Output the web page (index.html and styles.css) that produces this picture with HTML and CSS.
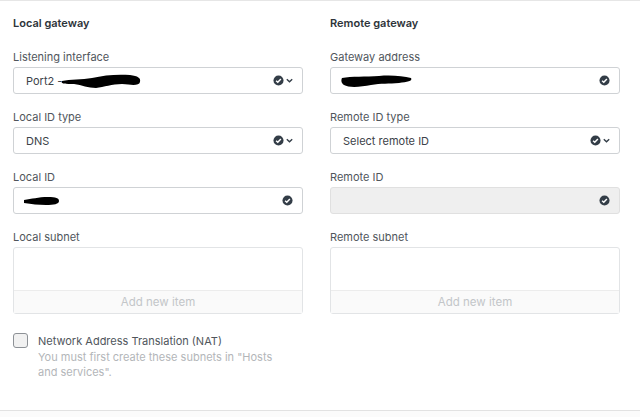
FILE: index.html
```html
<!DOCTYPE html>
<html>
<head>
  <title>Gateway settings</title>
  <link rel="stylesheet" href="styles.css">
</head>
<body>
  <div class="panel">
    <div class="columns">
      <div class="column">
        <h3>Local gateway</h3>

        <div class="field">
          <label>Listening interface</label>
          <div class="input select">
            <span class="value">Port2 -</span>
            <svg class="redact" width="82" height="16" viewBox="0 0 82 16"><path d="M2 8 C10 6 22 7 32 5 C44 2 58 1 70 2 C78 3 81 5 80 9 C79 13 72 12 62 11 C52 11 44 14 36 15 C28 15 22 12 14 11 C6 11 0 11 2 8 Z" fill="#000"/></svg>
            <span class="icons">
              <svg width="11" height="11" viewBox="0 0 12 12"><circle cx="6" cy="6" r="5.5" fill="#333d47"/><path d="M3.4 6.2 L5.2 7.9 L8.6 4.3" fill="none" stroke="#fff" stroke-width="1.6"/></svg>
              <svg width="9" height="9" viewBox="0 0 10 10"><path d="M2 3.5 L5 6.5 L8 3.5" fill="none" stroke="#333d47" stroke-width="1.5"/></svg>
            </span>
          </div>
        </div>

        <div class="field">
          <label>Local ID type</label>
          <div class="input select">
            <span class="value">DNS</span>
            <span class="icons">
              <svg width="11" height="11" viewBox="0 0 12 12"><circle cx="6" cy="6" r="5.5" fill="#333d47"/><path d="M3.4 6.2 L5.2 7.9 L8.6 4.3" fill="none" stroke="#fff" stroke-width="1.6"/></svg>
              <svg width="9" height="9" viewBox="0 0 10 10"><path d="M2 3.5 L5 6.5 L8 3.5" fill="none" stroke="#333d47" stroke-width="1.5"/></svg>
            </span>
          </div>
        </div>

        <div class="field">
          <label>Local ID</label>
          <div class="input">
            <svg class="redact" width="36" height="10" viewBox="0 0 36 10"><path d="M0 4 C8 3 14 1 24 1 C32 1 35 2 35 5 C35 8 30 9 22 9 C14 9 8 8 0 7 Z" fill="#000"/></svg>
            <span class="icons">
              <svg width="11" height="11" viewBox="0 0 12 12"><circle cx="6" cy="6" r="5.5" fill="#333d47"/><path d="M3.4 6.2 L5.2 7.9 L8.6 4.3" fill="none" stroke="#fff" stroke-width="1.6"/></svg>
            </span>
          </div>
        </div>

        <div class="field">
          <label>Local subnet</label>
          <div class="list">
            <div class="list-body"></div>
            <div class="list-add">Add new item</div>
          </div>
        </div>
      </div>

      <div class="column">
        <h3>Remote gateway</h3>

        <div class="field">
          <label>Gateway address</label>
          <div class="input">
            <svg class="redact" width="72" height="16" viewBox="0 0 72 16"><path d="M1 5 C10 3 25 4 38 3 C50 2 62 3 70 5 C72 8 66 9 58 10 C48 11 40 10 30 12 C20 14 8 15 3 12 C0 10 0 7 1 5 Z" fill="#000"/></svg>
            <span class="icons">
              <svg width="11" height="11" viewBox="0 0 12 12"><circle cx="6" cy="6" r="5.5" fill="#333d47"/><path d="M3.4 6.2 L5.2 7.9 L8.6 4.3" fill="none" stroke="#fff" stroke-width="1.6"/></svg>
            </span>
          </div>
        </div>

        <div class="field">
          <label>Remote ID type</label>
          <div class="input select">
            <span class="value">Select remote ID</span>
            <span class="icons">
              <svg width="11" height="11" viewBox="0 0 12 12"><circle cx="6" cy="6" r="5.5" fill="#333d47"/><path d="M3.4 6.2 L5.2 7.9 L8.6 4.3" fill="none" stroke="#fff" stroke-width="1.6"/></svg>
              <svg width="9" height="9" viewBox="0 0 10 10"><path d="M2 3.5 L5 6.5 L8 3.5" fill="none" stroke="#333d47" stroke-width="1.5"/></svg>
            </span>
          </div>
        </div>

        <div class="field">
          <label>Remote ID</label>
          <div class="input disabled">
            <span class="icons">
              <svg width="11" height="11" viewBox="0 0 12 12"><circle cx="6" cy="6" r="5.5" fill="#333d47"/><path d="M3.4 6.2 L5.2 7.9 L8.6 4.3" fill="none" stroke="#fff" stroke-width="1.6"/></svg>
            </span>
          </div>
        </div>

        <div class="field">
          <label>Remote subnet</label>
          <div class="list">
            <div class="list-body"></div>
            <div class="list-add">Add new item</div>
          </div>
        </div>
      </div>
    </div>

    <div class="nat">
      <span class="checkbox"></span>
      <div class="nat-text">
        <div class="nat-label">Network Address Translation (NAT)</div>
        <div class="nat-help">You must first create these subnets in "Hosts and services".</div>
      </div>
    </div>
  </div>
  <div class="footer"></div>
</body>
</html>
```

FILE: styles.css
```css
body {
  margin: 0;
  font-family: Inter, "Noto Sans", sans-serif;
  font-size: 11px;
  color: #444b52;
  background-color: #fff;
}
.panel {
  border-top: 1px solid #e6e6e6;
  padding: 14px 20px 0 13px;
  height: 410px;
  box-sizing: border-box;
}
.columns {
  display: grid;
  grid-template-columns: 290px 290px;
  column-gap: 27px;
}
h3 {
  margin: 0 0 19px;
  font-size: 11px;
  font-weight: 600;
  line-height: 16px;
  color: #2e343a;
}
.field {
  margin-bottom: 16px;
}
.field label {
  display: block;
  line-height: 14px;
  margin-bottom: 3px;
  color: #50565c;
}
.input {
  display: flex;
  align-items: center;
  height: 27px;
  box-sizing: border-box;
  border: 1px solid #cfd2d5;
  border-radius: 3px;
  padding: 0 8px 0 12px;
  color: #3c4248;
}
.input.disabled {
  background-color: #efefef;
  border-color: #e0e0e0;
}
.value {
  white-space: nowrap;
}
.redact {
  margin-left: -2px;
}
.icons {
  margin-left: auto;
  display: flex;
  align-items: center;
  gap: 1px;
}
.input:not(.select) .icons {
  margin-right: 1px;
}
.list {
  border: 1px solid #e2e4e6;
  border-radius: 3px;
  height: 67px;
  box-sizing: border-box;
  display: flex;
  flex-direction: column;
}
.list-body {
  flex: 1;
}
.list-add {
  height: 22px;
  line-height: 22px;
  text-align: center;
  background-color: #fafafa;
  border-top: 1px solid #ececec;
  color: #c3c6c9;
  font-size: 11.5px;
}
.nat {
  display: flex;
  gap: 10px;
  margin-top: 3px;
}
.checkbox {
  width: 15px;
  height: 15px;
  box-sizing: border-box;
  border: 1.5px solid #8d9196;
  border-radius: 3px;
  background-color: #f1f1f1;
  margin-top: 0;
}
.nat-label {
  line-height: 17px;
  color: #50565c;
}
.nat-help {
  width: 250px;
  line-height: 15px;
  color: #b3b6b9;
}
.footer {
  border-top: 1px solid #e2e2e2;
  height: 7px;
  background-color: #fbfbfb;
}
```
